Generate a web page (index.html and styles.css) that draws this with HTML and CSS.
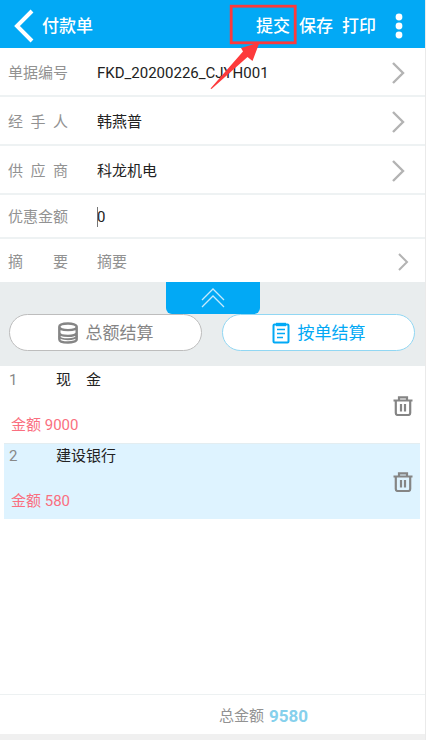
FILE: index.html
```html
<!DOCTYPE html>
<html lang="zh-CN">
<head>
<meta charset="utf-8">
<meta name="viewport" content="width=device-width, initial-scale=1">
<title>付款单</title>
<link rel="stylesheet" href="styles.css">
</head>
<body>
<div class="app">
  <header class="topbar">
    <button class="back" type="button" aria-label="返回">
      <svg width="20" height="34" viewBox="0 0 20 34"><path d="M18 2 3 17 18 32" fill="none" stroke="currentColor" stroke-width="4"/></svg>
    </button>
    <h1 class="title">付款单</h1>
    <nav class="actions">
      <button class="action" type="button">提交</button>
      <button class="action" type="button">保存</button>
      <button class="action" type="button">打印</button>
      <button class="more" type="button" aria-label="更多">
        <svg width="8" height="26" viewBox="0 0 8 26" fill="currentColor"><circle cx="4" cy="4" r="3.4"/><circle cx="4" cy="13" r="3.4"/><circle cx="4" cy="22" r="3.4"/></svg>
      </button>
    </nav>
    <svg class="callout" width="90" height="86" viewBox="0 0 90 86" aria-hidden="true">
      <rect x="22.2" y="2.2" width="64" height="36.6" fill="none" stroke="#fd3a3b" stroke-width="2.8"/>
      <path d="M1.500 84.500 34 47.500 32 44 50.500 38.500 43.500 57 38.500 53 2.500 85Z" fill="#fd3a3b"/>
    </svg>
  </header>

  <form class="fields">
    <button class="row" type="button">
      <span class="label">单据编号</span><span class="value">FKD_20200226_CJYH001</span>
      <svg class="chevron" width="14" height="22" viewBox="0 0 14 22"><path d="M2 1 12 11 2 21"/></svg>
    </button>
    <button class="row" type="button">
      <span class="label">经 手 人</span><span class="value">韩燕普</span>
      <svg class="chevron" width="14" height="22" viewBox="0 0 14 22"><path d="M2 1 12 11 2 21"/></svg>
    </button>
    <button class="row" type="button">
      <span class="label">供 应 商</span><span class="value">科龙机电</span>
      <svg class="chevron" width="14" height="22" viewBox="0 0 14 22"><path d="M2 1 12 11 2 21"/></svg>
    </button>
    <div class="row short">
      <label class="label" for="discount">优惠金额</label>
      <span class="value focused"><input id="discount" type="text" inputmode="decimal" value="0"></span>
    </div>
    <div class="row short">
      <label class="label" for="note">摘 要</label>
      <span class="value"><input id="note" type="text" placeholder="摘要"></span>
      <svg class="chevron small" width="11" height="18" viewBox="0 0 11 18"><path d="M1 1 9 9 1 17"/></svg>
    </div>
  </form>

  <section class="modes">
    <button class="collapse" type="button" aria-label="收起">
      <svg width="24" height="20" viewBox="0 0 24 20"><path d="M1 12 12 1 23 12M1 19 12 8 23 19" fill="none" stroke="currentColor" stroke-width="1.3"/></svg>
    </button>
    <div class="pills">
      <button class="pill" type="button">
        <svg width="20" height="22" viewBox="0 0 20 22" fill="none" stroke="currentColor" stroke-width="2.400"><path d="M1.300 4.800C1.300 .4 18.700 .4 18.700 4.800C18.700 9.200 1.300 9.200 1.300 4.800V17.200C1.300 21.600 18.700 21.600 18.700 17.200V4.800M1.300 10.500C1.300 15 18.700 15 18.700 10.500"/><path d="M1.300 14C1.300 18.300 18.700 18.300 18.700 14" stroke-width="1.800"/></svg>
        总额结算
      </button>
      <button class="pill active" type="button">
        <svg width="18" height="22" viewBox="0 0 18 22" fill="none" stroke="currentColor" stroke-width="2"><rect x="1.500" y="2.500" width="15" height="18" rx="1"/><path d="M4 2.500H14" stroke-width="3.400"/><path d="M5 7.500H13M5 11.500H13M5 15.500H11" stroke-width="1.600"/></svg>
        按单结算
      </button>
    </div>
  </section>

  <ul class="accounts">
    <li class="account">
      <span class="index">1</span><span class="name">现　金</span>
      <span class="amount">金额 9000</span>
      <button class="delete" type="button" aria-label="删除">
        <svg width="20" height="20" viewBox="0 0 20 20" fill="none" stroke="currentColor" stroke-width="2.200"><path d="M.5 4.500H19.500M6 4.500V1.400H14V4.500M2.800 4.500V17Q2.800 19 4.800 19H15.200Q17.200 19 17.200 17V4.500M8 8V15.500M12 8V15.500"/></svg>
      </button>
    </li>
    <li class="account selected">
      <span class="index">2</span><span class="name">建设银行</span>
      <span class="amount">金额 580</span>
      <button class="delete" type="button" aria-label="删除">
        <svg width="20" height="20" viewBox="0 0 20 20" fill="none" stroke="currentColor" stroke-width="2.200"><path d="M.5 4.500H19.500M6 4.500V1.400H14V4.500M2.800 4.500V17Q2.800 19 4.800 19H15.200Q17.200 19 17.200 17V4.500M8 8V15.500M12 8V15.500"/></svg>
      </button>
    </li>
  </ul>

  <footer class="total"><span>总金额</span><strong>9580</strong></footer>
</div>
</body>
</html>
```
FILE: styles.css
```css
* { box-sizing: border-box; }

body {
  margin: 0;
  background: #f0f0f0;
  color: #222;
  font-family: Roboto, "Noto Sans CJK SC", sans-serif;
  font-size: 15px;
  line-height: 20px;
}

button, input {
  margin: 0;
  padding: 0;
  border: 0;
  background: none;
  color: inherit;
  font: inherit;
}

svg { display: block; flex: none; }

.app {
  display: flex;
  flex-direction: column;
  min-height: 100vh;
  padding-bottom: 6px;
  border-right: 1px solid #eaeaea;
  background: #fff;
  background-clip: content-box;
}

.topbar {
  position: relative;
  display: flex;
  align-items: center;
  height: 48px;
  padding: 4px 22px 0 14px;
  background: #02a9f5;
  color: #fff;
}

.title {
  flex: 1;
  margin: 0 0 0 8px;
  font-size: 17px;
  font-weight: 500;
}

.actions {
  display: flex;
  align-items: center;
  gap: 9px;
  font-size: 17px;
  font-weight: 500;
}

.more { margin-left: 10px; }

.callout {
  position: absolute;
  z-index: 1;
  top: 4px;
  right: 126px;
}

.row {
  display: flex;
  align-items: center;
  width: 100%;
  height: 49px;
  padding: 2px 20px 0 8px;
  border-bottom: 2px solid #eef2f3;
  text-align: left;
}

.row.short { height: 44px; }
.row:last-child { height: 43px; border-bottom: 0; }

.label {
  width: 60px;
  margin-right: 29px;
  color: #929292;
  text-align: justify;
  text-align-last: justify;
}

.value {
  position: relative;
  flex: 1;
}

.value input {
  display: block;
  width: 100%;
  outline: 0;
}

.value input::placeholder { color: #929292; opacity: 1; }

.focused::before {
  content: "";
  position: absolute;
  left: 0;
  width: 1px;
  height: 20px;
  background: #777;
}

.chevron {
  fill: none;
  stroke: #b3b3b3;
  stroke-width: 2.4;
}

.chevron.small { margin-right: -4px; stroke-width: 2; }

.modes {
  display: flex;
  flex-direction: column;
  height: 84px;
  background: #e9edee;
}

.collapse {
  display: flex;
  align-items: center;
  justify-content: center;
  align-self: center;
  width: 94px;
  height: 32px;
  border-radius: 0 0 6px 6px;
  background: #02a9f5;
  color: #c5eafc;
}

.pills {
  display: grid;
  grid-template-columns: 1fr 1fr;
  gap: 20px;
  padding: 0 10px 0 9px;
}

.pill {
  display: flex;
  align-items: center;
  justify-content: center;
  gap: 8px;
  height: 37px;
  border: 1px solid #bdbdbd;
  border-radius: 19px;
  background: #fff;
  color: #858585;
  font-size: 17px;
}

.pill.active {
  border-color: #91d7f3;
  color: #02a9f5;
}

.accounts {
  flex: 1;
  margin: 0;
  padding: 0 5px 0 4px;
  list-style: none;
}

.account {
  display: grid;
  grid-template-columns: 47px 1fr auto;
  grid-template-rows: 24px 1fr;
  align-items: center;
  height: 77px;
  padding: 2px 7px 8px 5px;
}

.account.selected {
  height: 76px;
  padding-top: 0;
  border-top: 1px solid #e3edf1;
  background: #def3ff;
}

.index { color: #888; }

.amount {
  grid-row: 2;
  grid-column: 1 / 3;
  align-self: end;
  padding-left: 2px;
  color: #fa6f80;
}

.delete {
  grid-row: 1 / 3;
  grid-column: 3;
  margin-top: 8px;
  color: #858585;
}

.total {
  display: flex;
  align-items: center;
  gap: 5px;
  height: 40px;
  padding: 2px 0 0 219px;
  border-top: 1px solid #edf1f2;
  color: #929292;
}

.total strong { color: #86d0ec; font-size: 17px; }
```
